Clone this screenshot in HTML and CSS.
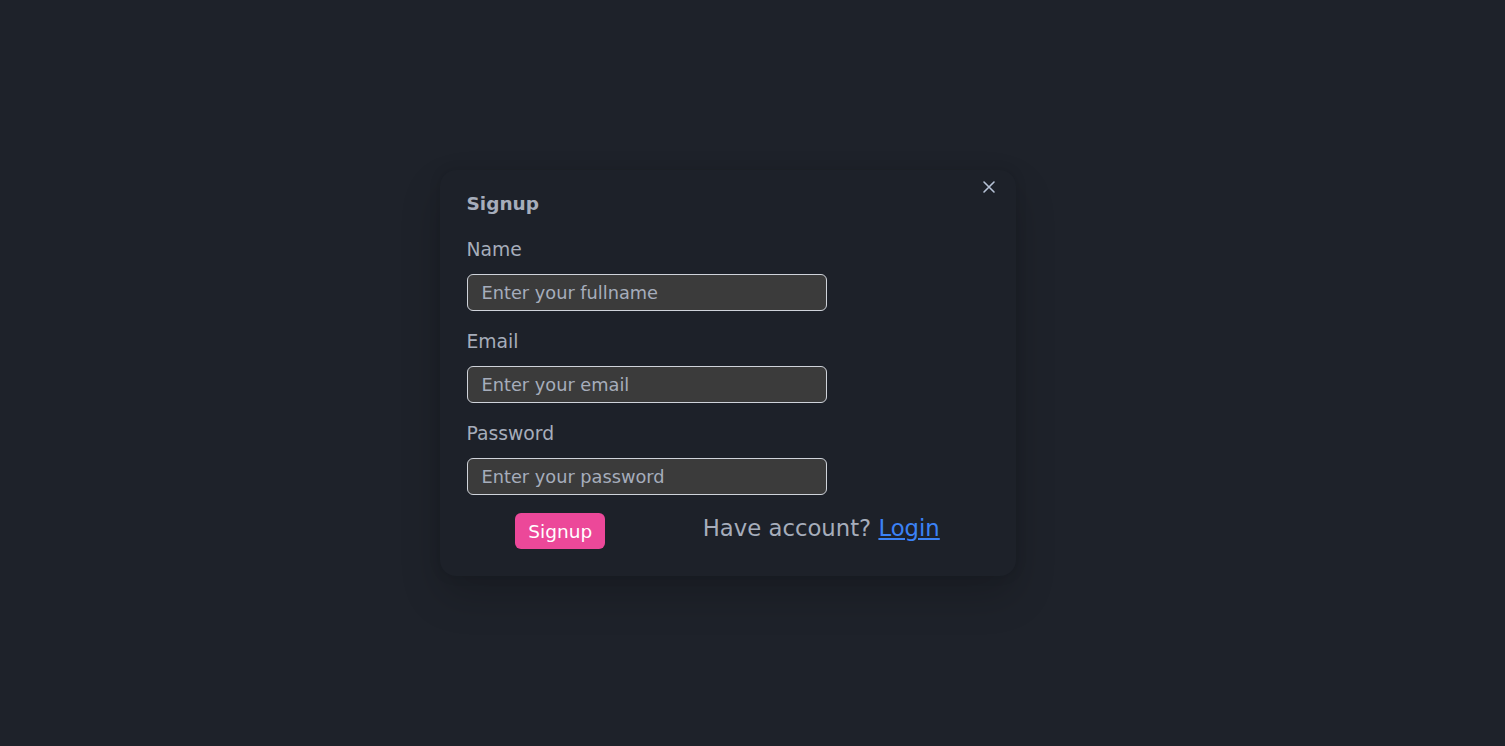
FILE: index.html
```html
<!DOCTYPE html>
<html lang="en">
<head>
<meta charset="utf-8">
<title>Signup</title>
<link rel="stylesheet" href="styles.css">
</head>
<body>
<div class="overlay">
  <div class="modal">
    <button class="close" type="button" aria-label="Close">
      <svg width="14" height="14" viewBox="0 0 14 14" fill="none" stroke="currentColor" stroke-width="1.6" stroke-linecap="round"><path d="M2 2L12 12M12 2L2 12"/></svg>
    </button>
    <h3 class="title">Signup</h3>
    <form class="form">
      <div class="field">
        <label class="label" for="name">Name</label>
        <input class="input" id="name" type="text" placeholder="Enter your fullname">
      </div>
      <div class="field">
        <label class="label" for="email">Email</label>
        <input class="input" id="email" type="email" placeholder="Enter your email">
      </div>
      <div class="field">
        <label class="label" for="password">Password</label>
        <input class="input" id="password" type="password" placeholder="Enter your password">
      </div>
      <div class="actions">
        <button class="submit" type="button">Signup</button>
        <p class="switch">Have account? <a href="#" class="link">Login</a></p>
      </div>
    </form>
  </div>
</div>
</body>
</html>
```

FILE: styles.css
```css
* { box-sizing: border-box; }
html, body { margin: 0; padding: 0; }
body {
  background: #1e222a;
  font-family: "DejaVu Sans", "Open Sans", sans-serif;
  color: #a6adbb;
  height: 746px;
  overflow: hidden;
}
.overlay {
  height: 100%;
  display: flex;
  align-items: center;
  justify-content: center;
  padding-right: 50px;
}
.modal {
  position: relative;
  width: 576px;
  height: 406px;
  background: #1d2129;
  border-radius: 16px;
  padding: 18px 27px 0 27px;
  box-shadow: 0 20px 40px rgba(0,0,0,0.18), 0 0 12px rgba(0,0,0,0.12);
}
.close {
  position: absolute;
  top: 5px;
  right: 15px;
  width: 24px;
  height: 24px;
  display: flex;
  align-items: center;
  justify-content: center;
  background: transparent;
  border: 0;
  padding: 0;
  color: #b6c2d6;
}
.title {
  margin: 0;
  font-size: 18.5px;
  font-weight: 700;
  line-height: 32px;
  color: #a6adbb;
}
.form {
  margin-top: 18px;
  display: flex;
  flex-direction: column;
  gap: 19px;
}
.label {
  display: block;
  font-size: 18.75px;
  line-height: 24px;
  margin-bottom: 12px;
}
.input {
  display: block;
  width: 360px;
  height: 37px;
  background: #3b3b3b;
  border: 1px solid #cfd3da;
  border-radius: 6px;
  padding: 0 14px;
  font-family: inherit;
  font-size: 17.75px;
  color: #a6adbb;
  outline: none;
}
.input::placeholder { color: #a6adbb; opacity: 1; }
.actions {
  display: flex;
  justify-content: space-around;
  align-items: flex-start;
  margin-top: -1px;
}
.submit {
  width: 90px;
  height: 36px;
  background: #ec4899;
  border: 0;
  border-radius: 6px;
  color: #fff;
  font-family: inherit;
  font-size: 18.5px;
  font-weight: 400;
  padding: 0;
}
.switch {
  margin: 0;
  font-size: 22.75px;
  line-height: 30px;
  color: #a6adbb;
}
.link { color: #3b82f6; text-decoration: underline; }
```
